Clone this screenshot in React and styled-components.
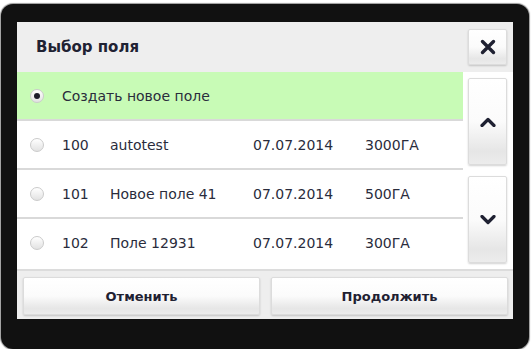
import React from 'react';
import styled, { createGlobalStyle } from 'styled-components';

const GlobalStyle = createGlobalStyle`
	html, body {
		margin: 0;
		padding: 0;
		background: #ffffff;
	}
	body {
		font-family: "DejaVu Sans", Verdana, sans-serif;
	}
`;

const Frame = styled.div`
	box-sizing: border-box;
	width: 528px;
	height: 345px;
	margin: 4px 0 0 1px;
	padding: 18px 15px 30px 16px;
	background: #111111;
	border-radius: 12px;
	box-shadow: 0 0 1px 1px #9a9a9a;
`;

const Panel = styled.div`
	display: flex;
	flex-direction: column;
	width: 496px;
	height: 297px;
	background: #ffffff;
`;

const Header = styled.div`
	display: flex;
	align-items: center;
	justify-content: space-between;
	height: 50px;
	padding: 0 6px 0 19px;
	background: #eeeeee;
`;

const Title = styled.h1`
	margin: 0;
	font-size: 15px;
	font-weight: bold;
	color: #1f2233;
`;

const GlossButton = styled.button`
	display: flex;
	align-items: center;
	justify-content: center;
	box-sizing: border-box;
	padding: 0;
	border: 1px solid #dcdcdc;
	border-radius: 2px;
	background: linear-gradient(#ffffff 0%, #fbfbfb 50%, #e6e6e6 85%, #ececec 100%);
	box-shadow: 0 1px 2px rgba(0, 0, 0, 0.18);
	font-family: "DejaVu Sans", Verdana, sans-serif;
	color: #1f2132;
	cursor: pointer;
`;

const CloseButton = styled(GlossButton)`
	width: 39px;
	height: 36px;
`;

const Body = styled.div`
	display: flex;
	height: 197px;
`;

const List = styled.div`
	display: flex;
	flex-direction: column;
	width: 446px;
`;

const Row = styled.label`
	display: flex;
	align-items: center;
	box-sizing: border-box;
	height: ${p => (p.$last ? '48px' : '49px')};
	padding-left: 13px;
	border-bottom: ${p => (p.$last ? 'none' : '2px solid #d9d9d9')};
	background: ${p => (p.$active ? '#c8fbb6' : '#ffffff')};
	font-size: 14px;
	color: #2a2c3c;
	cursor: pointer;
`;

const Radio = styled.span`
	position: relative;
	flex: none;
	box-sizing: border-box;
	width: 14px;
	height: 14px;
	margin-right: 18px;
	border: 1px solid #cbcbcb;
	border-radius: 50%;
	background: linear-gradient(#ffffff, #e2e2e2);

	&::after {
		content: '';
		display: ${p => (p.$checked ? 'block' : 'none')};
		position: absolute;
		left: 3px;
		top: 3px;
		width: 6px;
		height: 6px;
		border-radius: 50%;
		background: #1c1c2a;
	}
`;

const Cell = styled.span`
	flex: none;
	width: ${p => p.$w}px;
	white-space: nowrap;
`;

const Side = styled.div`
	display: flex;
	flex-direction: column;
	justify-content: space-between;
	width: 50px;
	padding: 6px 6px 6px 5px;
	box-sizing: border-box;
`;

const ScrollButton = styled(GlossButton)`
	width: 39px;
	height: 87px;
`;

const Footer = styled.div`
	display: flex;
	gap: 11px;
	box-sizing: border-box;
	height: 50px;
	padding: 6px 5px 6px 6px;
	border-top: 2px solid #dcdcdc;
	background: #eeeeee;
`;

const FooterButton = styled(GlossButton)`
	flex: 1;
	height: 38px;
	font-size: 13px;
	font-weight: bold;
`;

const Chevron = ({ up }) => (
	<svg width="16" height="10" viewBox="0 0 16 10">
		<path
			d={up ? 'M2 8.5 L8 2.5 L14 8.5' : 'M2 1.5 L8 7.5 L14 1.5'}
			fill="none"
			stroke="#1f2132"
			strokeWidth="3.2"
			strokeLinecap="round"
			strokeLinejoin="round"
		/>
	</svg>
);

const Cross = () => (
	<svg width="16" height="16" viewBox="0 0 16 16">
		<path d="M2.5 2.5 L13.5 13.5 M13.5 2.5 L2.5 13.5" stroke="#1f2132" strokeWidth="3.4" strokeLinecap="round" />
	</svg>
);

const fields = [
	{ id: '100', name: 'autotest', date: '07.07.2014', area: '3000ГА' },
	{ id: '101', name: 'Новое поле 41', date: '07.07.2014', area: '500ГА' },
	{ id: '102', name: 'Поле 12931', date: '07.07.2014', area: '300ГА' }
];

export default function App() {
	return (
		<>
			<GlobalStyle />
			<Frame>
				<Panel>
					<Header>
						<Title>Выбор поля</Title>
						<CloseButton><Cross /></CloseButton>
					</Header>
					<Body>
						<List>
							<Row $active>
								<Radio $checked />
								<span>Создать новое поле</span>
							</Row>
							{fields.map((f, i) => (
								<Row key={f.id} $last={i === fields.length - 1}>
									<Radio />
									<Cell $w={48}>{f.id}</Cell>
									<Cell $w={143}>{f.name}</Cell>
									<Cell $w={112}>{f.date}</Cell>
									<Cell $w={80}>{f.area}</Cell>
								</Row>
							))}
						</List>
						<Side>
							<ScrollButton><Chevron up /></ScrollButton>
							<ScrollButton><Chevron /></ScrollButton>
						</Side>
					</Body>
					<Footer>
						<FooterButton>Отменить</FooterButton>
						<FooterButton>Продолжить</FooterButton>
					</Footer>
				</Panel>
			</Frame>
		</>
	);
}
